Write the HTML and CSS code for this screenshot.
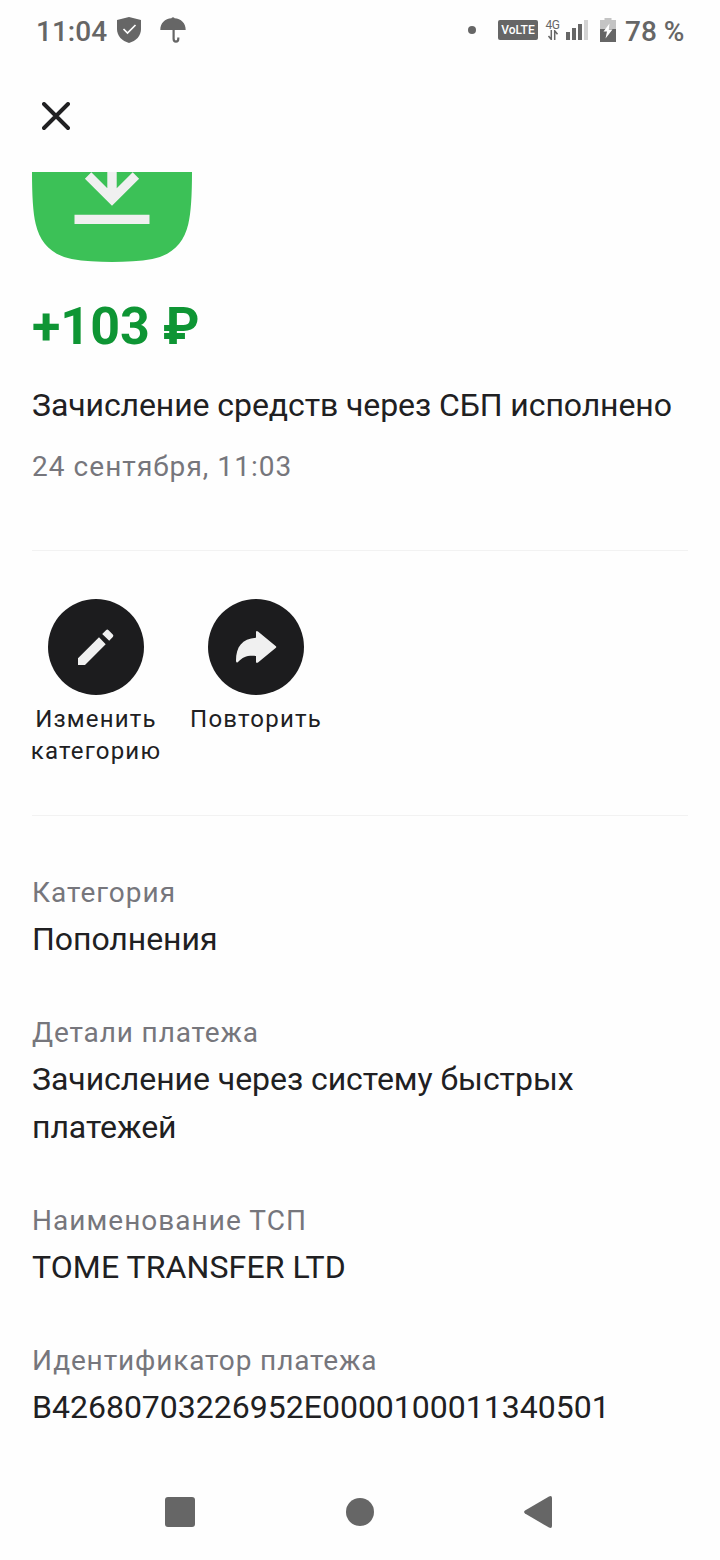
FILE: index.html
```
<!DOCTYPE html>
<html lang="ru">
<head>
    <meta charset="UTF-8">
    <meta name="viewport" content="width=device-width, initial-scale=1.0">
    <title>Зачисление средств</title>
    <link rel="stylesheet" href="styles.css">
</head>
<body>
    <div class="screen">
        <div class="status-bar">
            <span class="time">11:04</span>
            <svg class="shield" width="24" height="26" viewBox="0 0 24 26">
                <path d="M12 0L24 3V12C24 19 19 24 12 26C5 24 0 19 0 12V3Z" fill="#666"/>
                <path d="M6.5 12L10.5 16L18.5 8" fill="none" stroke="#fff" stroke-width="1.7"/>
            </svg>
            <svg class="umbrella" width="26" height="26" viewBox="0 0 26 26">
                <path d="M0.3 13C0.3 6 5 1.5 11.5 1.2V1Q13 -0.4 14.5 1V1.2C21 1.5 25.7 6 25.7 13Z" fill="#666"/>
                <path d="M13.6 12V21.8C13.6 25.6 18.3 25.6 18.3 21.8V20.5" fill="none" stroke="#666" stroke-width="2.2"/>
            </svg>
            <div class="status-right">
                <span class="dot"></span>
                <span class="volte">VoLTE</span>
                <div class="network">
                    <span class="network-type">4G</span>
                    <svg width="12" height="10" viewBox="0 0 12 10">
                        <path d="M4.3 0V9.5L1.5 6M7.7 10V0.8L10.5 4.3" fill="none" stroke="#666" stroke-width="1.5"/>
                    </svg>
                </div>
                <svg class="signal" width="22" height="20" viewBox="0 0 22 20">
                    <path d="M0 12H4V20H0ZM6 8H10V20H6ZM12 4H16V20H12Z" fill="#666"/>
                    <path d="M18 0H22V20H18Z" fill="#d3d3d3"/>
                </svg>
                <svg class="battery" width="16" height="24" viewBox="0 0 16 24">
                    <path d="M4.5 0H11.5V2H16V11H0V2H4.5Z" fill="#c4c4c4"/>
                    <path d="M0 11H16V24H0Z" fill="#666"/>
                    <path d="M9.5 5.5L3.5 13.5H7L5.5 20.5L12.5 11.5H8.8Z" fill="#fff"/>
                </svg>
                <span class="percent">78 %</span>
            </div>
        </div>

        <header class="header">
            <button class="close-btn" aria-label="Закрыть">
                <svg width="28" height="28" viewBox="0 0 28 28">
                    <path d="M2 2L26 26M26 2L2 26" stroke="#202022" stroke-width="3.9" stroke-linecap="round"/>
                </svg>
            </button>
        </header>

        <main class="content">
            <svg class="logo" width="160" height="90" viewBox="0 70 160 90">
                <path d="M0 70C0 93 1 111 3.7 122C8 141 20 153 39.7 157C52 159.3 66 160 80 160C94 160 108 159.3 120.3 157C140 153 152 141 156.3 122C159 111 160 93 160 70Z" fill="#3cc157"/>
                <path d="M75.3 60V86.3L59.3 70.3L52.9 76.7L80 103.8L107.1 76.7L100.7 70.3L84.7 86.3V60ZM42.5 112.7H117.5V122H42.5Z" fill="#f0f0f0"/>
            </svg>

            <div class="amount">+103 ₽</div>
            <div class="title">Зачисление средств через СБП исполнено</div>
            <div class="date">24 сентября, 11:03</div>

            <div class="actions">
                <div class="action">
                    <div class="action-icon">
                        <svg width="96" height="96" viewBox="0 0 96 96">
                            <path d="M30 59.3V66H37L57.7 45.3L51 38.3ZM54.2 35L58 31.2Q59.3 30 60.6 31.2L64.8 35.4Q66 36.7 64.8 38L61.2 41.8Z" fill="#f0f0f0"/>
                        </svg>
                    </div>
                    <div class="action-text">Изменить категорию</div>
                </div>
                <div class="action">
                    <div class="action-icon">
                        <svg width="96" height="96" viewBox="0 0 96 96">
                            <path d="M48 38.7V33.5Q48 31.2 50 32.5L67.6 46.9Q69 48 67.6 49.1L50 63.5Q48 64.8 48 62.5V57C39 56.3 35 58 30 63Q28 64.7 28 61.5C28 48 34 39.5 48 38.7Z" fill="#f0f0f0"/>
                        </svg>
                    </div>
                    <div class="action-text">Повторить</div>
                </div>
            </div>

            <div class="details">
                <div class="detail">
                    <div class="label">Категория</div>
                    <div class="value">Пополнения</div>
                </div>
                <div class="detail">
                    <div class="label label-tight">Детали платежа</div>
                    <div class="value">Зачисление через систему быстрых платежей</div>
                </div>
                <div class="detail">
                    <div class="label">Наименование ТСП</div>
                    <div class="value value-latin">TOME TRANSFER LTD</div>
                </div>
                <div class="detail">
                    <div class="label label-tight">Идентификатор платежа</div>
                    <div class="value value-id">B42680703226952E0000100011340501</div>
                </div>
            </div>
        </main>

        <nav class="nav-bar">
            <div class="nav-item"><span class="nav-square"></span></div>
            <div class="nav-item"><span class="nav-circle"></span></div>
            <div class="nav-item">
                <svg class="nav-back" width="28" height="32" viewBox="0 0 28 32">
                    <path d="M1 14.6L25 0.4Q28 -0.8 28 2V30Q28 32.8 25 31.6L1 17.4Q-0.8 16 1 14.6Z" fill="#666"/>
                </svg>
            </div>
        </nav>
    </div>
</body>
</html>
```

FILE: styles.css
```
* {
    box-sizing: border-box;
}

body {
    margin: 0;
    font-family: Roboto, sans-serif;
    background-color: #fefefe;
    color: #202022;
}

.screen {
    display: flex;
    flex-direction: column;
    width: 720px;
    height: 1560px;
    overflow: hidden;
}

.status-bar {
    display: flex;
    align-items: center;
    height: 60px;
    padding: 0 36px;
    font-size: 28px;
    font-weight: 500;
    color: #666;
}

.time,
.percent {
    line-height: 32px;
    padding-top: 3px;
    white-space: nowrap;
}

.time {
    width: 81px;
}

.umbrella {
    margin-left: 19px;
}

.status-right {
    display: flex;
    align-items: center;
    margin-left: auto;
}

.dot {
    width: 8px;
    height: 8px;
    margin-right: 22px;
    border-radius: 50%;
    background-color: #666;
}

.volte {
    width: 40px;
    height: 20px;
    margin-right: 7px;
    border-radius: 2px;
    background-color: #666;
    color: #fff;
    font-size: 12px;
    line-height: 21px;
    text-align: center;
}

.network {
    display: flex;
    flex-direction: column;
    align-items: center;
    width: 15px;
    margin-right: 6px;
}

.network-type {
    font-size: 12px;
    font-weight: normal;
    letter-spacing: -0.5px;
    line-height: 10px;
}

.battery {
    margin: 0 9px 0 12px;
}

.percent {
    width: 59px;
}

.header {
    display: flex;
    align-items: center;
    height: 112px;
    padding: 0 42px;
}

.close-btn {
    display: flex;
    padding: 0;
    border: none;
    background: none;
    cursor: pointer;
}

.content {
    flex: 1;
    padding: 0 32px;
    overflow: hidden;
}

.logo {
    display: block;
}

.amount {
    margin-top: 33px;
    font-size: 52px;
    font-weight: bold;
    line-height: 64px;
    color: #0e9534;
}

.title {
    margin-top: 22px;
    font-size: 32px;
    line-height: 48px;
    letter-spacing: -0.09px;
    white-space: nowrap;
}

.date {
    margin-top: 18px;
    font-size: 28px;
    line-height: 40px;
    letter-spacing: 1.05px;
    color: #76767c;
}

.actions {
    display: flex;
    height: 266px;
    margin-top: 63px;
    padding-top: 48px;
    border-top: 1px solid #f2f2f2;
    border-bottom: 1px solid #f2f2f2;
}

.action {
    width: 160px;
    margin-left: -16px;
    margin-right: 16px;
    text-align: center;
}

.action-icon {
    width: 96px;
    height: 96px;
    margin: 0 auto 8px;
    border-radius: 50%;
    background-color: #1c1c1e;
}

.action-text {
    font-size: 24px;
    line-height: 32px;
    letter-spacing: 1.2px;
}

.details {
    padding-top: 55px;
}

.detail {
    margin-bottom: 48px;
}

.label {
    font-size: 28px;
    line-height: 44px;
    letter-spacing: 1.03px;
    color: #76767c;
}

.label-tight {
    letter-spacing: 0.87px;
}

.value {
    font-size: 32px;
    line-height: 48px;
    letter-spacing: -0.05px;
}

.value-latin {
    letter-spacing: 0.1px;
}

.value-id {
    letter-spacing: 0;
}

.nav-bar {
    display: flex;
    height: 96px;
    padding: 0 90px;
}

.nav-item {
    display: flex;
    flex: 1;
    align-items: center;
    justify-content: center;
}

.nav-square {
    width: 30px;
    height: 30px;
    border-radius: 3px;
    background-color: #666;
}

.nav-circle {
    width: 28px;
    height: 28px;
    border-radius: 50%;
    background-color: #666;
}

.nav-back {
    margin-right: 4px;
}
```
